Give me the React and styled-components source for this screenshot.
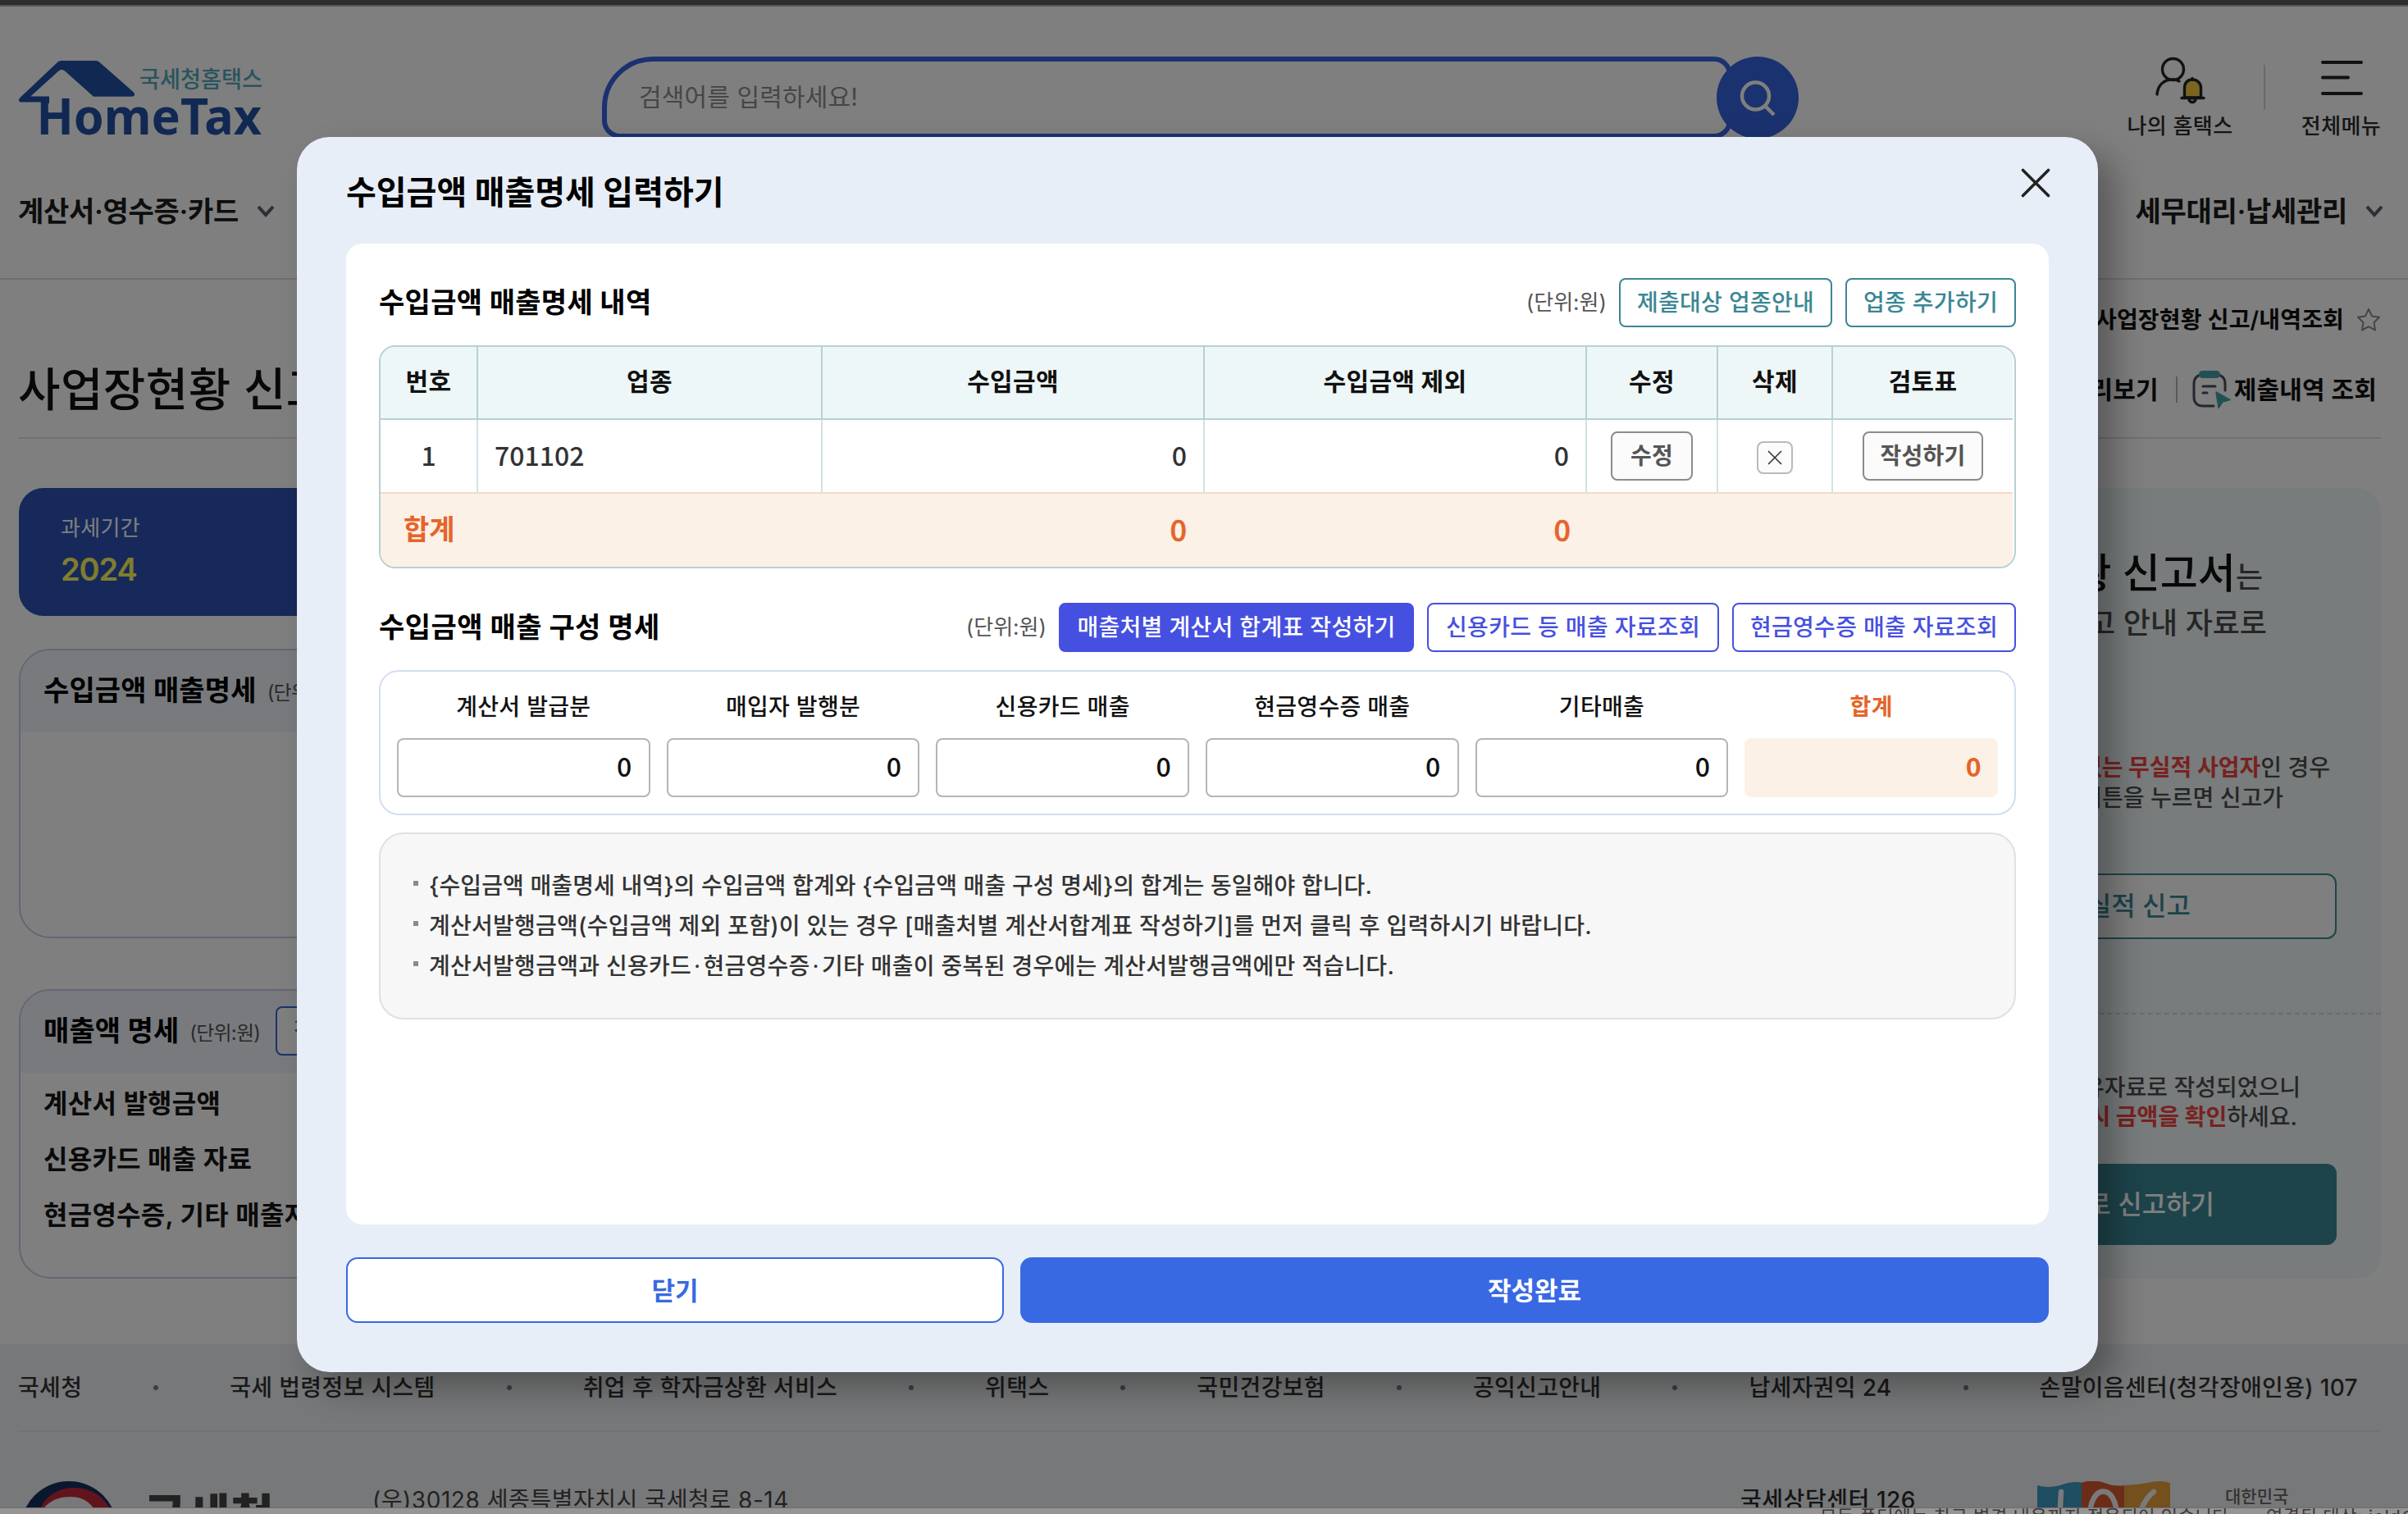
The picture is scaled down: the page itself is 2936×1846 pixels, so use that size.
import React from "react";
import styled, { createGlobalStyle, css } from "styled-components";

const FONT = `Inter, "Noto Sans CJK KR", sans-serif`;
const TABULAR = `"Noto Sans CJK KR", sans-serif`;

const Global = createGlobalStyle`
  * { box-sizing: border-box; }
  html, body { margin: 0; padding: 0; }
  body { font-family: ${FONT}; color: #111; overflow: hidden; }
  button { font-family: inherit; cursor: pointer; }
`;

const Screen = styled.div`
  width: 2936px;
  height: 1846px;
  display: grid;
  grid-template-rows: 8px 1830px 8px;
  overflow: hidden;
`;
const TopStrip = styled.div`
  background: #2d2d2d;
  border-bottom: 2px solid #585858;
`;
const BottomStrip = styled.div`
  display: grid;
  grid-template-columns: 544px 1fr;
  height: 8px;
  overflow: hidden;
  background: #979494;
  border-top: 1px solid #6c6c6c;
  padding-left: 2219px;
  color: #3a3838;
  font-size: 22px;
  line-height: 20px;
  letter-spacing: 0.6px;
  white-space: nowrap;
`;
const Viewport = styled.div`
  position: relative;
  overflow: hidden;
  background: #fff;
`;

/* header */
const Header = styled.header`
  height: 333px;
  border-bottom: 2px solid #dedede;
`;
const HeaderTop = styled.div`
  display: grid;
  grid-template-columns: 711px 1fr auto;
  padding: 61px 33px 0 23px;
  height: 161px;
`;
const Logo = styled.svg`
  display: block;
  width: 300px;
  height: 100px;
  overflow: visible;
`;
const Search = styled.div`
  display: flex;
`;
const SearchField = styled.div`
  width: 1378px;
  height: 100px;
  border: 6px solid #3664e0;
  border-radius: 62px 22px 22px 22px;
  padding-left: 39px;
  font-size: 30px;
  line-height: 87px;
  letter-spacing: 0.15px;
  color: #8c8c8c;
`;
const SearchButton = styled.div`
  width: 100px;
  height: 100px;
  margin-left: -19px;
  border-radius: 50%;
  background: #3664e0;
  display: flex;
  align-items: center;
  justify-content: center;
`;
const Utilities = styled.div`
  display: flex;
`;
const Utility = styled.div`
  display: flex;
  flex-direction: column;
  align-items: center;
  width: ${(p) => p.$w}px;
  font-size: 26px;
  font-weight: 500;
  letter-spacing: 0.4px;
  line-height: 36px;
  color: #2a2a2a;
  white-space: nowrap;
  svg { display: block; margin-bottom: 7px; margin-top: -4px; }
`;
const UtilityRule = styled.div`
  width: 2px;
  height: 54px;
  margin: 10px 44px 0 38px;
  background: #d2d2d2;
`;
const Nav = styled.nav`
  display: flex;
  justify-content: space-between;
  align-items: center;
  height: 170px;
  padding: 8px 30px 0 22px;
`;
const NavItem = styled.div`
  display: flex;
  align-items: center;
  gap: 22px;
  font-size: 34px;
  font-weight: 600;
  letter-spacing: -0.3px;
  line-height: 44px;
  color: #1c1c1c;
`;

/* page */
const Main = styled.main`
  height: 1298px;
  padding: 0 33px 0 23px;
`;
const Crumb = styled.div`
  height: 98px;
  display: flex;
  align-items: center;
  justify-content: flex-end;
  gap: 15px;
  padding-bottom: 1px;
  font-size: 28px;
  font-weight: 600;
  letter-spacing: 0.15px;
  line-height: 40px;
`;
const TitleRow = styled.div`
  height: 96px;
  display: flex;
  justify-content: space-between;
  align-items: center;
  padding-bottom: 23px;
  border-bottom: 2px solid #e0e0e0;
`;
const PageTitle = styled.h1`
  margin: 0 0 0 -1px;
  font-size: 56px;
  line-height: 70px;
  letter-spacing: 0.4px;
  font-weight: 500;
`;
const TitleTools = styled.div`
  display: flex;
  align-items: center;
  gap: 2px;
  font-size: 30px;
  font-weight: 600;
  letter-spacing: 0.15px;
  line-height: 40px;
  padding-right: 5px;
`;
const ToolRule = styled.div`
  width: 2px;
  height: 32px;
  margin: 0 15px 0 19px;
  background: #b4b4b4;
`;
const Columns = styled.div`
  display: flex;
  justify-content: space-between;
  margin-top: 60px;
`;
const Left = styled.div`
  width: 2150px;
`;
const Period = styled.div`
  height: 156px;
  padding: 30px 51px;
  border-radius: 30px;
  background: #2e52b6;
  color: #fff;
  font-size: 26px;
  line-height: 38px;
  letter-spacing: 0.3px;
`;
const Year = styled.div`
  font-size: 38px;
  line-height: 62px;
  font-weight: 600;
  letter-spacing: -1.1px;
  color: #fffa5c;
`;
const Card = styled.section`
  height: ${(p) => p.$h}px;
  margin-top: ${(p) => p.$gap}px;
  border: 2px solid #c2cee8;
  border-radius: 38px;
  overflow: hidden;
`;
const CardHead = styled.div`
  display: flex;
  align-items: center;
  height: 100px;
  padding: 0 0 2px 28px;
  background: #f0f5fd;
  font-size: 34px;
  font-weight: 700;
  letter-spacing: 0.15px;
  line-height: 48px;
  color: #000;
`;
const CardUnit = styled.span`
  margin: 6px 19px 0 13px;
  font-size: 24px;
  font-weight: 400;
  letter-spacing: -0.8px;
  line-height: 36px;
  color: #555;
`;
const CardButton = styled.span`
  width: 200px;
  height: 60px;
  border: 2px solid #3a64d8;
  border-radius: 8px;
  padding-left: 20px;
  background: #fff;
  color: #3a64d8;
  font-size: 28px;
  font-weight: 500;
  line-height: 56px;
`;
const CardRow = styled.div`
  padding-left: 28px;
  height: 68px;
  font-size: 32px;
  line-height: 76px;
  font-weight: 600;
  letter-spacing: 0.25px;
  color: #151515;
`;

const Aside = styled.aside`
  width: 622px;
  height: 964px;
  padding-top: 66px;
  border-radius: 30px;
  background: #f0f8f8;
  text-align: right;
  white-space: nowrap;
  overflow: hidden;
`;
const Line = styled.div`
  height: ${(p) => p.$lh}px;
  margin-top: ${(p) => p.$mt || 0}px;
  padding-right: ${(p) => p.$end}px;
  font-size: ${(p) => p.$size}px;
  line-height: ${(p) => p.$lh}px;
  font-weight: 500;
  color: #4c4c4c;
`;
const Strong = styled.b`
  font-size: 50px;
  font-weight: 500;
  color: #111;
`;
const Red = styled.b`
  font-weight: 700;
  color: #ee4542;
`;
const AsideButton = styled.div`
  margin: ${(p) => p.$mt}px 54px 0;
  height: ${(p) => p.$h}px;
  border: 2px solid #3a8896;
  border-radius: 12px;
  padding-right: ${(p) => p.$end}px;
  font-size: 32px;
  font-weight: 500;
  line-height: ${(p) => p.$h - 4}px;
  background: ${(p) => (p.$solid ? "#3a8896" : "#fff")};
  color: ${(p) => (p.$solid ? "#fff" : "#3a8896")};
`;
const Dashed = styled.div`
  margin-top: 90px;
  border-top: 2px dashed #d0d6d8;
`;

/* footer */
const Footer = styled.footer`
  height: 199px;
  padding: 0 33px 0 22px;
  background: #eff0f2;
  overflow: hidden;
`;
const Links = styled.div`
  display: flex;
  align-items: center;
  gap: 87px;
  height: 107px;
  border-bottom: 2px solid #e3e5e8;
  font-size: 28px;
  font-weight: 500;
  letter-spacing: 0.33px;
  line-height: 40px;
  color: #333;
  white-space: nowrap;
`;
const Dot = styled.i`
  flex: none;
  width: 6px;
  height: 6px;
  border-radius: 50%;
  background: #787c8c;
`;
const FooterInfo = styled.div`
  display: grid;
  grid-template-columns: 152px 280px 1668px 361px 230px 1fr;
  padding-top: 60px;
  white-space: nowrap;
  svg { display: block; }
`;
const AgencyName = styled.div`
  font-size: 58px;
  font-weight: 800;
  line-height: 86px;
  color: #444;
`;
const Address = styled.div`
  font-size: 28px;
  letter-spacing: 0.55px;
  font-weight: ${(p) => p.$weight || 400};
  line-height: 46px;
  color: ${(p) => (p.$weight ? "#2a2a2a" : "#444")};
`;
const BadgeText = styled.div`
  font-size: 21px;
  font-weight: 500;
  line-height: 37px;
  color: #666;
`;

/* dialog */
const Overlay = styled.div`
  position: absolute;
  inset: 0;
  padding: 159px 0 0 362px;
  background: rgba(0, 0, 0, 0.5);
`;
const Dialog = styled.div`
  width: 2196px;
  height: 1506px;
  padding: 0 60px;
  border-radius: 40px;
  background: #e7eef7;
  box-shadow: 20px 20px 40px rgba(0, 0, 0, 0.3);
`;
const DialogHead = styled.div`
  height: 130px;
  display: flex;
  justify-content: space-between;
  align-items: center;
  padding-top: 6px;
`;
const DialogTitle = styled.h2`
  margin: 0;
  font-size: 40px;
  font-weight: 700;
  line-height: 60px;
  color: #000;
`;
const CloseIcon = styled.svg`
  width: 36px;
  height: 36px;
  margin: -24px -2px 0 0;
`;
const Body = styled.div`
  height: 1196px;
  padding: 40px;
  border-radius: 20px;
  background: #fff;
`;
const SectionHead = styled.div`
  display: flex;
  align-items: center;
  height: 64px;
  margin-top: ${(p) => p.$mt || 0}px;
`;
const SectionTitle = styled.h3`
  flex: 1;
  margin: 0;
  font-size: 34px;
  font-weight: 700;
  letter-spacing: ${(p) => p.$ls}px;
  line-height: 50px;
  color: #000;
`;
const Unit = styled.span`
  margin-right: -1px;
  font-size: 26px;
  line-height: 38px;
  color: #555;
`;
const tones = {
  teal: css`border-color: #3a8794; color: #3a8794; background: #fff;`,
  blue: css`border-color: #4650e0; color: #4650e0; background: #fff;`,
  solid: css`border-color: #4650e0; color: #fff; background: #4650e0;`,
  gray: css`border-color: #8b8b8b; color: #555; background: #fbfbfb; font-weight: 600;`,
};
const SmallButton = styled.button`
  height: 60px;
  width: ${(p) => p.$w}px;
  margin-left: ${(p) => (p.$flush ? 0 : 16)}px;
  padding: 0;
  border: 2px solid;
  border-radius: 8px;
  font-size: 28px;
  font-weight: 500;
  letter-spacing: 0.3px;
  line-height: 56px;
  white-space: nowrap;
  ${(p) => tones[p.$tone]}
`;
const Table = styled.div`
  width: 1996px;
  margin-top: 20px;
  border: 2px solid #b7d0d3;
  border-radius: 20px;
  padding-right: 2px;
  overflow: hidden;
`;
const Row = styled.div`
  display: grid;
  grid-template-columns: 119px 420px 466px 466px 160px 140px 219px;
  height: ${(p) => p.$h}px;
`;
const HeadRow = styled(Row)`
  background: #eef7f7;
  border-bottom: 2px solid #b7d0d3;
`;
const SumRow = styled(Row)`
  background: #fcf1e6;
  border-top: 2px solid #f3dac4;
`;
const Cell = styled.div`
  display: flex;
  align-items: center;
  justify-content: ${(p) => p.$align || "center"};
  padding: 0 20px;
  border-right: 2px solid #cfe3e6;
  font-family: ${TABULAR};
  font-size: 32px;
  font-weight: 500;
  line-height: 40px;
  padding-bottom: 5px;
  color: #333;
  &:last-child { border-right: 0; }
`;
const ButtonCell = styled(Cell)`
  padding-bottom: 0;
  font-family: ${FONT};
`;
const HeadCell = styled(Cell)`
  font-family: ${FONT};
  font-size: 30px;
  font-weight: 700;
  letter-spacing: 0.3px;
  padding-bottom: 3px;
  border-color: #b7d0d3;
  color: #111;
`;
const SumCell = styled(Cell)`
  border-color: transparent;
  padding-left: 28px;
  padding-bottom: 6px;
  font-size: ${(p) => p.$size || 36}px;
  font-weight: ${(p) => (p.$size ? 600 : 500)};
  -webkit-text-stroke: ${(p) => (p.$size ? 0 : 0.6)}px #e5642b;
  color: #e5642b;
`;
const DeleteButton = styled.button`
  width: 44px;
  height: 40px;
  margin-top: 4px;
  padding: 0;
  display: flex;
  align-items: center;
  justify-content: center;
  border: 2px solid #bababa;
  border-radius: 8px;
  background: #fbfbfb;
`;
const Fields = styled.div`
  display: grid;
  grid-template-columns: repeat(6, 1fr);
  column-gap: 20px;
  height: 177px;
  margin-top: 20px;
  padding: 22px 20px 0;
  border: 2px solid #d2ddf3;
  border-radius: 24px;
`;
const Field = styled.label`
  display: block;
  text-align: center;
  font-size: 28px;
  font-weight: ${(p) => (p.$total ? 700 : 500)};
  letter-spacing: 0.3px;
  line-height: 42px;
  color: ${(p) => (p.$total ? "#e5642b" : "#111")};
`;
const Value = styled.div`
  height: 72px;
  margin-top: 17px;
  padding-right: ${(p) => (p.$total ? 18 : 20)}px;
  border: 2px solid ${(p) => (p.$total ? "#fcf1e6" : "#b5b5b5")};
  border-radius: 8px;
  background: ${(p) => (p.$total ? "#fcf1e6" : "#fff")};
  font-family: ${TABULAR};
  font-size: 32px;
  line-height: 63px;
  text-align: right;
`;
const Notes = styled.ul`
  height: 228px;
  margin: 21px 0 0;
  padding: 39px 38px 0 40px;
  border: 2px solid #e0e0e4;
  border-radius: 30px;
  background: #f7f7f7;
  list-style: none;
  font-size: 28px;
  font-weight: 500;
  line-height: 49px;
  color: #333;
`;
const Note = styled.li`
  display: flex;
  white-space: nowrap;
  letter-spacing: ${(p) => p.$ls}px;
  &::before {
    content: "";
    flex: none;
    width: 6px;
    height: 6px;
    margin: 18px 13px 0 0;
    background: #8b8b8b;
  }
`;
const MidDot = styled.span`
  padding: 0 3px;
  font-weight: 400;
`;
const Actions = styled.div`
  display: grid;
  grid-template-columns: 802px 1254px;
  column-gap: 20px;
  margin-top: 40px;
`;
const Action = styled.button`
  height: 80px;
  padding: 0;
  border: 2px solid #3969e2;
  border-radius: 14px;
  background: ${(p) => (p.$primary ? "#3969e2" : "#fff")};
  color: ${(p) => (p.$primary ? "#fff" : "#3969e2")};
  font-size: 31px;
  font-weight: 600;
  line-height: 75px;
`;

const Chevron = () => (
  <svg width="22" height="16" viewBox="0 0 22 16" fill="none">
    <path d="M2 2 11 12 20 2" stroke="#5c5f6a" strokeWidth="4" />
  </svg>
);

const links = [
  "국세청",
  "국세 법령정보 시스템",
  "취업 후 학자금상환 서비스",
  "위택스",
  "국민건강보험",
  "공익신고안내",
  "납세자권익 24",
  "손말이음센터(청각장애인용) 107",
];
const heads = ["번호", "업종", "수입금액", "수입금액 제외", "수정", "삭제", "검토표"];
const fields = ["계산서 발급분", "매입자 발행분", "신용카드 매출", "현금영수증 매출", "기타매출", "합계"];
const notes = [
  { ls: 0.1, parts: ["{수입금액 매출명세 내역}의 수입금액 합계와 {수입금액 매출 구성 명세}의 합계는 동일해야 합니다."] },
  { ls: 0.25, parts: ["계산서발행금액(수입금액 제외 포함)이 있는 경우 [매출처별 계산서합계표 작성하기]를 먼저 클릭 후 입력하시기 바랍니다."] },
  { ls: 0.27, parts: ["계산서발행금액과 신용카드", "현금영수증", "기타 매출이 중복된 경우에는 계산서발행금액에만 적습니다."] },
];

function PageHeader() {
  return (
    <Header>
      <HeaderTop>
        <Logo viewBox="23 69 300 100">
          <path
            d="M24 119.500 70.500 75.500Q72 74 74.500 74H117Q119.500 74 121.500 76L163 112.500Q166 117.700 160.500 117.700H114L79 86.500Q75 83.500 71.500 86.500L37.300 117.500H60V126H50V124.500H25Q21.500 123 24 119.500Z"
            fill="#2252a4"
          />
          <text x="170" y="106.500" fontSize="28" textLength="150" lengthAdjust="spacingAndGlyphs" fill="#54a8bc" fontFamily="Noto Sans CJK KR" fontWeight="500">
            국세청홈택스
          </text>
          <text x="44.500" y="164" fontSize="61.500" textLength="274.500" lengthAdjust="spacingAndGlyphs" fill="#2252a4" fontFamily="Noto Sans" fontWeight="700">
            HomeTax
          </text>
        </Logo>
        <Search>
          <SearchField>검색어를 입력하세요!</SearchField>
          <SearchButton>
            <svg width="50" height="50" viewBox="0 0 50 50" fill="none" stroke="#fff" strokeWidth="4.500">
              <circle cx="22.500" cy="23" r="16.500" />
              <path d="m34 35 11 11" />
            </svg>
          </SearchButton>
        </Search>
        <Utilities>
          <Utility $w={128}>
            <svg width="68" height="64" viewBox="2624 65 68 64" fill="none" stroke="#242424" strokeWidth="3.400" strokeLinecap="round">
              <circle cx="2649.500" cy="84.500" r="13" />
              <path d="M2630 115c1-11 8-18 19-18 3 0 6 .5 8 2" />
              <path d="M2663.500 119v-12c0-6 4-10 9.500-10s10.500 4 10.500 10v12Z" fill="#f8cb42" />
              <path d="M2660 119.500h27M2673 97v-1.500M2669 121c0 5 8 5 8 0" fill="#f8cb42" />
            </svg>
            나의 홈택스
          </Utility>
          <UtilityRule />
          <Utility $w={97}>
            <svg width="54" height="64" viewBox="2828 65 54 64" fill="none" stroke="#242424" strokeWidth="4" strokeLinecap="round">
              <path d="M2832 76h47M2832 94.500h31M2832 114h47" />
            </svg>
            전체메뉴
          </Utility>
        </Utilities>
      </HeaderTop>
      <Nav>
        <NavItem>계산서·영수증·카드<Chevron /></NavItem>
        <NavItem>세무대리·납세관리<Chevron /></NavItem>
      </Nav>
    </Header>
  );
}

function PageBody() {
  return (
    <Main>
      <Crumb>
        사업장현황 신고/내역조회
        <svg width="30" height="30" viewBox="0 0 30 30" fill="none" stroke="#8a8a8a" strokeWidth="2" strokeLinejoin="round">
          <path d="m15 2 4 8.400 9 1.300-6.500 6.500 1.500 9.300-8-4.300-8 4.300 1.500-9.300L2 11.700l9-1.300Z" />
        </svg>
      </Crumb>
      <TitleRow>
        <PageTitle>사업장현황 신고</PageTitle>
        <TitleTools>
          미리보기
          <ToolRule />
          <svg width="50" height="48" viewBox="2671 451 50 48" fill="none">
            <path d="M2698 495h-13c-7 0-11-4-11-11v-16c0-7 4-11 11-11h16c7 0 11 4 11 11v8" stroke="#4c4c60" strokeWidth="3" strokeLinecap="round" />
            <rect x="2680" y="452" width="26" height="9" rx="4.500" fill="#46a0aa" />
            <path d="M2685 471h15M2685 479h5" stroke="#4c4c60" strokeWidth="3" strokeLinecap="round" />
            <path d="m2701 478 17 9.500-9 2.500-5 7.500Z" fill="#46a0aa" stroke="#46a0aa" strokeWidth="1.500" strokeLinejoin="round" />
          </svg>
          <span>제출내역 조회</span>
        </TitleTools>
      </TitleRow>
      <Columns>
        <Left>
          <Period>
            과세기간
            <Year>2024</Year>
          </Period>
          <Card $h={353} $gap={40}>
            <CardHead>수입금액 매출명세<CardUnit>(단위:원)</CardUnit></CardHead>
          </Card>
          <Card $h={353} $gap={62}>
            <CardHead>매출액 명세<CardUnit>(단위:원)</CardUnit><CardButton>작성하기</CardButton></CardHead>
            <CardRow>계산서 발행금액</CardRow>
            <CardRow>신용카드 매출 자료</CardRow>
            <CardRow>현금영수증, 기타 매출자료</CardRow>
          </Card>
        </Left>
        <Aside>
          <Line $end={144} $size={36} $lh={76}><Strong>사업장현황 신고서</Strong>는</Line>
          <Line $end={139} $size={36} $lh={46}>신고 안내 자료로</Line>
          <Line $end={62} $size={28} $lh={37} $mt={135}><Red>없는 무실적 사업자</Red>인 경우</Line>
          <Line $end={119} $size={28} $lh={37}>버튼을 누르면 신고가</Line>
          <AsideButton $mt={73} $h={80} $end={176}>무실적 신고</AsideButton>
          <Dashed />
          <Line $end={98} $size={28} $lh={36} $mt={71}>보유자료로 작성되었으니</Line>
          <Line $end={102} $size={28} $lh={36}><Red>반드시 금액을 확인</Red>하세요.</Line>
          <AsideButton $mt={39} $h={99} $end={147} $solid>바로 신고하기</AsideButton>
        </Aside>
      </Columns>
    </Main>
  );
}

function PageFooter() {
  return (
    <Footer>
      <Links>
        {links.map((t, i) => (
          <React.Fragment key={t}>
            {i > 0 && <Dot />}
            <span>{t}</span>
          </React.Fragment>
        ))}
      </Links>
      <FooterInfo>
        <svg width="130" height="60" viewBox="22 1806 130 60">
          <circle cx="84" cy="1865" r="59" fill="#14305c" />
          <path d="M46 1846c6-18 22-32 43-32 26 0 42 14 50 36v16h-16c-2-20-18-41-37-41-18 0-28 10-36 24Z" fill="#c4283a" />
          <path d="M46 1850c8-16 20-25 40-25s33 12 37 41H46Z" fill="#eff0f2" />
        </svg>
        <AgencyName>국세청</AgencyName>
        <Address>(우)30128 세종특별자치시 국세청로 8-14</Address>
        <Address $weight={500}>국세상담센터 126</Address>
        <svg width="164" height="60" viewBox="2482 1806 164 60" fill="none">
          <path d="M2483 1811q12 4 28 0 16-6 27-3v58h-55Z" fill="#3f9ac4" />
          <path d="M2537 1808q12-5 28 0 12 5 25 3v55h-53Z" fill="#d65a30" />
          <path d="M2589 1811q14 0 28-3 16-4 28 0v58h-56Z" fill="#e6a03c" />
          <path d="M2512 1819q-1 18-2 40M2547 1850c0-42 33-42 33 0M2625 1819q-16 12-19 40" stroke="#f4f4f4" strokeWidth="6.500" strokeLinecap="round" />
        </svg>
        <BadgeText>대한민국</BadgeText>
      </FooterInfo>
    </Footer>
  );
}

function RevenueDialog() {
  return (
    <Dialog role="dialog">
      <DialogHead>
        <DialogTitle>수입금액 매출명세 입력하기</DialogTitle>
        <CloseIcon viewBox="0 0 36 36" stroke="#222" strokeWidth="3.600" strokeLinecap="round">
          <path d="M2.500 2.500 33.500 33.500M33.500 2.500 2.500 33.500" />
        </CloseIcon>
      </DialogHead>
      <Body>
        <SectionHead>
          <SectionTitle $ls={0.3}>수입금액 매출명세 내역</SectionTitle>
          <Unit>(단위:원)</Unit>
          <SmallButton $w={260} $tone="teal">제출대상 업종안내</SmallButton>
          <SmallButton $w={208} $tone="teal">업종 추가하기</SmallButton>
        </SectionHead>
        <Table>
          <HeadRow $h={89}>
            {heads.map((h) => <HeadCell key={h}>{h}</HeadCell>)}
          </HeadRow>
          <Row $h={88}>
            <Cell>1</Cell>
            <Cell $align="flex-start">701102</Cell>
            <Cell $align="flex-end">0</Cell>
            <Cell $align="flex-end">0</Cell>
            <ButtonCell><SmallButton $w={100} $tone="gray" $flush>수정</SmallButton></ButtonCell>
            <ButtonCell>
              <DeleteButton aria-label="삭제">
                <svg width="18" height="18" viewBox="0 0 18 18" stroke="#333" strokeWidth="1.600">
                  <path d="m1 1 16 16M17 1 1 17" />
                </svg>
              </DeleteButton>
            </ButtonCell>
            <ButtonCell><SmallButton $w={147} $tone="gray" $flush>작성하기</SmallButton></ButtonCell>
          </Row>
          <SumRow $h={91}>
            <SumCell $align="flex-start" $size={34}>합계</SumCell>
            <SumCell />
            <SumCell $align="flex-end">0</SumCell>
            <SumCell $align="flex-end">0</SumCell>
          </SumRow>
        </Table>
        <SectionHead $mt={40}>
          <SectionTitle $ls={0.45}>수입금액 매출 구성 명세</SectionTitle>
          <Unit>(단위:원)</Unit>
          <SmallButton $w={433} $tone="solid">매출처별 계산서 합계표 작성하기</SmallButton>
          <SmallButton $w={356} $tone="blue">신용카드 등 매출 자료조회</SmallButton>
          <SmallButton $w={346} $tone="blue">현금영수증 매출 자료조회</SmallButton>
        </SectionHead>
        <Fields>
          {fields.map((f, i) => (
            <Field key={f} $total={i === 5}>
              {f}
              <Value $total={i === 5}>0</Value>
            </Field>
          ))}
        </Fields>
        <Notes>
          {notes.map((n) => (
            <Note key={n.parts[0]} $ls={n.ls}>
              {n.parts.map((part, i) => (
                <React.Fragment key={part}>
                  {i > 0 && <MidDot>·</MidDot>}
                  <span>{part}</span>
                </React.Fragment>
              ))}
            </Note>
          ))}
        </Notes>
      </Body>
      <Actions>
        <Action>닫기</Action>
        <Action $primary>작성완료</Action>
      </Actions>
    </Dialog>
  );
}

export default function App() {
  return (
    <Screen>
      <Global />
      <TopStrip />
      <Viewport>
        <PageHeader />
        <PageBody />
        <PageFooter />
        <Overlay>
          <RevenueDialog />
        </Overlay>
      </Viewport>
      <BottomStrip>
        <span>모든 폴더에는 최근 변경 내용까지 적용되어 있습니다.</span>
        <span>연결된 대상: iold@i</span>
      </BottomStrip>
    </Screen>
  );
}
